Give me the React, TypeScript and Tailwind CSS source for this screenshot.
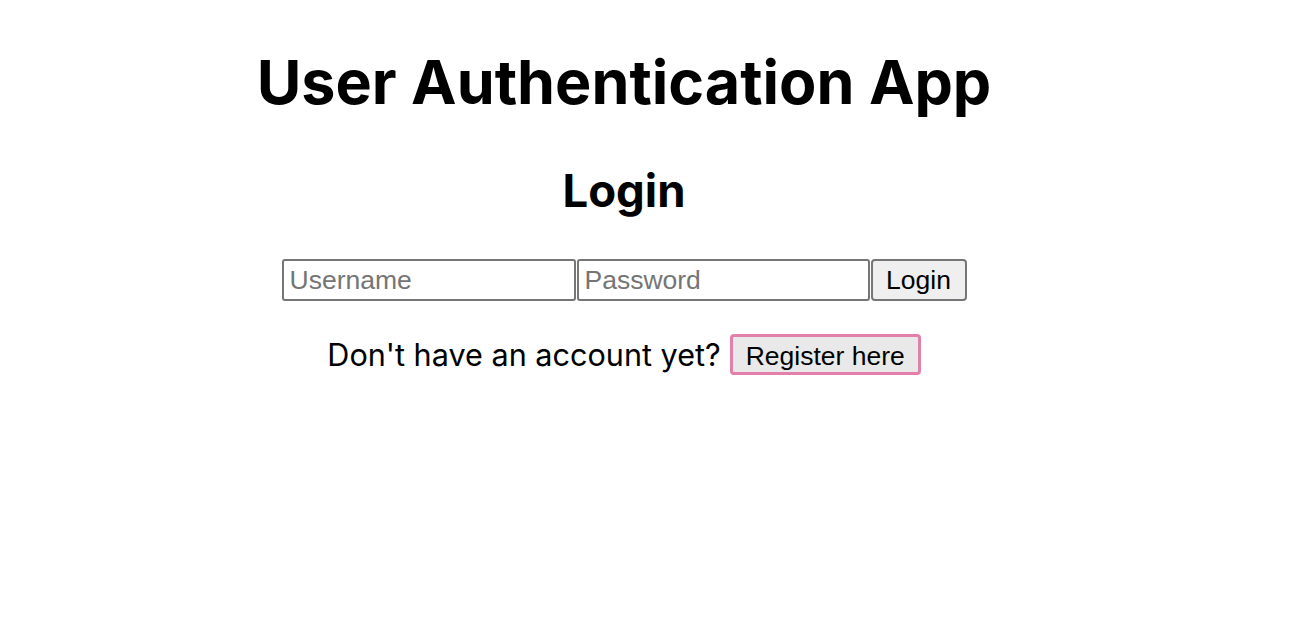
import React from "react";

export default function App() {
  return (
    <div className="min-h-[628px] w-[1314px] bg-white text-black">
      <div className="flex w-[1248px] flex-col items-center text-center">
        <h1
          className="mt-[46px] text-[61px] font-bold leading-[72px]"
          style={{ fontFamily: "Inter, 'Noto Sans', sans-serif" }}
        >
          User Authentication App
        </h1>
        <h2
          className="mt-[45px] text-[45.5px] font-bold leading-[55px]"
          style={{ fontFamily: "Inter, 'Noto Sans', sans-serif" }}
        >
          Login
        </h2>
        <form
          className="mt-[41px] flex items-center gap-[1px]"
          onSubmit={(e) => e.preventDefault()}
          style={{ fontFamily: "'Liberation Sans', Arial, sans-serif" }}
        >
          <input
            type="text"
            placeholder="Username"
            className="box-border h-[42px] w-[294px] rounded-[3px] border-2 border-[#767676] bg-white px-[6px] text-[26.5px] text-black outline-none placeholder:text-[#757575]"
          />
          <input
            type="password"
            placeholder="Password"
            className="box-border h-[42px] w-[293px] rounded-[3px] border-2 border-[#767676] bg-white px-[6px] text-[26.5px] text-black outline-none placeholder:text-[#757575]"
          />
          <button
            type="submit"
            className="box-border h-[42px] w-[96px] rounded-[4px] border-2 border-[#767676] bg-[#efefef] text-[26.5px] text-black"
          >
            Login
          </button>
        </form>
        <div className="mt-[33px] flex items-center gap-[9px]">
          <span
            className="text-[30.6px] leading-[36px]"
            style={{ fontFamily: "Inter, 'Noto Sans', sans-serif" }}
          >
            Don't have an account yet?
          </span>
          <button
            type="button"
            className="box-border h-[41px] w-[191px] rounded-[4px] border-[3px] border-[#e37fab] bg-[#e9e9e9] text-[26.5px] text-black"
            style={{ fontFamily: "'Liberation Sans', Arial, sans-serif" }}
          >
            Register here
          </button>
        </div>
      </div>
    </div>
  );
}
